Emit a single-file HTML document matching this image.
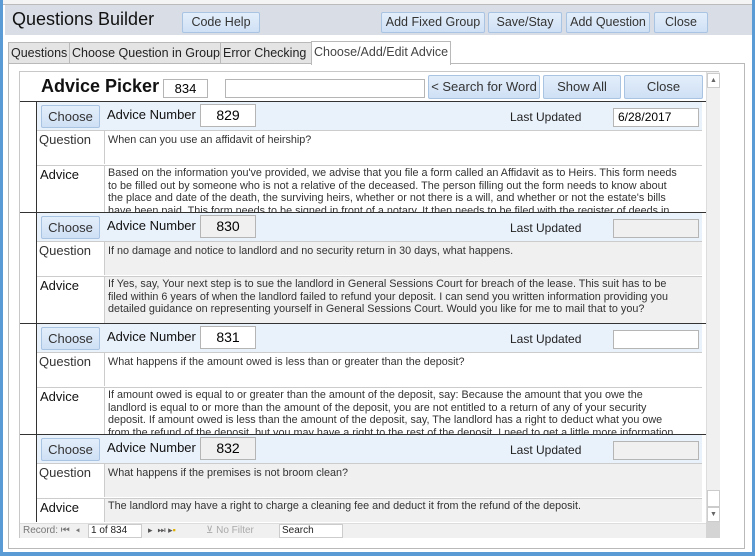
<!DOCTYPE html>
<html><head><style>
*{box-sizing:border-box;margin:0;padding:0}
body{width:755px;height:556px;overflow:hidden;background:#5b9bd5;font-family:"Liberation Sans",sans-serif;position:relative}
.a{position:absolute;white-space:nowrap}
.btn{position:absolute;background:linear-gradient(#e3eefa,#cfe0f5);border:1px solid #a9c3e3;border-radius:2px;color:#333;font-size:12.5px;text-align:center;white-space:nowrap}
.tab{position:absolute;top:42px;height:22px;background:#e4e4e4;border:1px solid #b9b9b9;font-size:12.5px;color:#222;padding:3px 2px 0;white-space:nowrap;overflow:hidden}
.box{position:absolute;border:1px solid #b5b5b5;background:#fff;font-size:13px;color:#000}
.t{position:absolute;font-size:10.8px;color:#333;line-height:12.5px;white-space:nowrap;overflow:hidden}
</style></head><body>
<div class="a" style="left:3px;top:0;width:749px;height:552px;background:#fff"></div>
<div class="a" style="left:3px;top:0;width:749px;height:5px;background:#f4f4f4;border-bottom:1px solid #bbb"></div>
<div class="a" style="left:5px;top:5px;width:747px;height:30px;background:#d9dee6"></div>
<div class="a" style="left:12px;top:9px;font-size:18px;color:#111">Questions Builder</div>
<div class="btn" style="left:182px;top:12px;width:78px;height:21px;line-height:19px">Code Help</div>
<div class="btn" style="left:381px;top:12px;width:104px;height:21px;line-height:19px">Add Fixed Group</div>
<div class="btn" style="left:488px;top:12px;width:74px;height:21px;line-height:19px">Save/Stay</div>
<div class="btn" style="left:566px;top:12px;width:84px;height:21px;line-height:19px">Add Question</div>
<div class="btn" style="left:654px;top:12px;width:54px;height:21px;line-height:19px">Close</div>
<div class="a" style="left:5px;top:35px;width:747px;height:517px;background:#fff"></div>
<div class="tab" style="left:8px;width:62px">Questions</div>
<div class="tab" style="left:69px;width:152px">Choose Question in Group</div>
<div class="tab" style="left:220px;width:92px">Error Checking</div>
<div class="tab" style="left:311px;top:41px;width:140px;height:24px;background:#fff;border-bottom:none;color:#444">Choose/Add/Edit Advice</div>
<div class="a" style="left:8px;top:63px;width:737px;height:486px;border:1px solid #b9b9b9;border-top:none"></div>
<div class="a" style="left:451px;top:63px;width:294px;height:1px;background:#b9b9b9"></div>
<div class="a" style="left:19px;top:71px;width:700px;height:467px;border:1px solid #c8c8c8"></div>
<div class="a" style="left:41px;top:76px;font-size:18px;font-weight:bold;color:#111">Advice Picker</div>
<div class="box" style="left:163px;top:79px;width:45px;height:19px;text-align:center;line-height:17px">834</div>
<div class="box" style="left:225px;top:79px;width:200px;height:19px"></div>
<div class="btn" style="left:428px;top:75px;width:112px;height:24px;line-height:22px;font-size:13px">&lt; Search for Word</div>
<div class="btn" style="left:543px;top:75px;width:78px;height:24px;line-height:22px;font-size:13px">Show All</div>
<div class="btn" style="left:624px;top:75px;width:79px;height:24px;line-height:22px;font-size:13px">Close</div>
<div class="a" style="left:706px;top:72px;width:14px;height:450px;background:#f0f0f0;border-left:1px solid #ddd"></div>
<div class="a" style="left:707px;top:73px;width:13px;height:15px;background:#fff;border:1px solid #ccc;font-size:7px;color:#666;text-align:center;line-height:13px">▲</div>
<div class="a" style="left:707px;top:490px;width:13px;height:17px;background:#fff;border:1px solid #ccc"></div>
<div class="a" style="left:707px;top:507px;width:13px;height:15px;background:#fff;border:1px solid #ccc;font-size:7px;color:#666;text-align:center;line-height:13px">▼</div>
<div class="a" style="left:706px;top:522px;width:14px;height:16px;background:#d4d4d4"></div>
<div id="recs"></div>
<div class="a" style="left:20px;top:523px;width:686px;height:15px;background:#f0f0f0;border-top:1px solid #ddd"></div>
<div class="a" style="left:23px;top:525px;font-size:10px;color:#777">Record: ⏮ &nbsp;◂</div>
<div class="a" style="left:88px;top:524px;width:54px;height:14px;background:#fff;border:1px solid #ccc;font-size:10px;color:#222;padding-left:2px;line-height:12px">1 of 834</div>
<div class="a" style="left:148px;top:525px;font-size:9px;color:#555">▸ &nbsp;⏭ ▸<span style="color:#e0b000">▪</span></div>
<div class="a" style="left:206px;top:525px;font-size:10px;color:#aaa">⊻ No Filter</div>
<div class="a" style="left:279px;top:524px;width:64px;height:14px;background:#fff;border:1px solid #ccc;font-size:10px;color:#222;padding-left:2px;line-height:12px">Search</div>
<script>
var R=[
["829","6/28/2017","When can you use an affidavit of heirship?",["Based on the information you've provided, we advise that you file a form called an Affidavit as to Heirs. This form needs","to be filled out by someone who is not a relative of the deceased. The person filling out the form needs to know about","the place and date of the death, the surviving heirs, whether or not there is a will, and whether or not the estate's bills","have been paid. This form needs to be signed in front of a notary. It then needs to be filed with the register of deeds in"],0],
["830","","If no damage and notice to landlord and no security return in 30 days, what happens.",["If Yes, say, Your next step is to sue the landlord in General Sessions Court for breach of the lease.  This suit has to be","filed within 6 years of when the landlord failed to refund your deposit.  I can send you written information providing you","detailed guidance on representing yourself in General Sessions Court.  Would you like for me to mail that to you?"],1],
["831","","What happens if the amount owed is less than or greater than the deposit?",["If amount owed is equal to or greater than the amount of the deposit, say: Because the amount that you owe the","landlord is equal to or more than the amount of the deposit, you are not entitled to a return of any of your security","deposit.    If amount owed is less than the amount of the deposit, say, The landlord has a right to deduct what you owe","from the refund of the deposit, but you may have a right to the rest of the deposit.  I need to get a little more information"],0],
["832","","What happens if the premises is not broom clean?",["The landlord may have a right to charge a cleaning fee and deduct it from the refund of the deposit."],1]];
var h="";
R.forEach(function(r,i){var y=101+i*111;var bg=r[4]?"#f0f0f0":"#fff";var end=(i==3)?522:y+111;
h+='<div class="a" style="left:20px;top:'+y+'px;width:686px;height:1px;background:#333"></div>';
h+='<div class="a" style="left:36px;top:'+(y+1)+'px;width:1px;height:'+(end-y-1)+'px;background:#333"></div>';
h+='<div class="a" style="left:37px;top:'+(y+1)+'px;width:665px;height:28px;background:#e9f1fb"></div>';
h+='<div class="btn" style="left:41px;top:'+(y+4)+'px;width:59px;height:23px;line-height:21px;font-size:13px">Choose</div>';
h+='<div class="a" style="left:107px;top:'+(y+6)+'px;font-size:13px;color:#111">Advice Number</div>';
h+='<div class="box" style="left:200px;top:'+(y+3)+'px;width:56px;height:23px;text-align:center;line-height:21px;font-size:14px;background:'+(r[4]?"#f0f0f0":"#fff")+'">'+r[0]+'</div>';
h+='<div class="a" style="left:510px;top:'+(y+9)+'px;font-size:12px;color:#222">Last Updated</div>';
h+='<div class="box" style="left:613px;top:'+(y+7)+'px;width:86px;height:19px;font-size:12px;padding-left:4px;line-height:17px;background:'+(r[4]?"#f0f0f0":"#fff")+'">'+r[1]+'</div>';
var qh=Math.min(34,end-y-29),ah=end-y-64;
h+='<div class="a" style="left:37px;top:'+(y+29)+'px;width:665px;height:'+qh+'px;border-top:1px solid #ccc;border-right:1px solid #ccc"></div>';
h+='<div class="a" style="left:104px;top:'+(y+30)+'px;width:598px;height:'+(qh-1)+'px;background:'+bg+';border-left:1px solid #ccc"></div>';
h+='<div class="a" style="left:39px;top:'+(y+31)+'px;font-size:13px;color:#333">Question</div>';
h+='<div class="t" style="left:108px;top:'+(y+33)+'px">'+r[2]+'</div>';
h+='<div class="a" style="left:37px;top:'+(y+64)+'px;width:665px;height:'+ah+'px;border-top:1px solid #ccc;border-right:1px solid #ccc"></div>';
h+='<div class="a" style="left:104px;top:'+(y+65)+'px;width:598px;height:'+(ah-1)+'px;background:'+bg+';border-left:1px solid #ccc"></div>';
h+='<div class="a" style="left:40px;top:'+(y+66)+'px;font-size:13px;color:#111">Advice</div>';
h+='<div class="t" style="left:108px;top:'+(y+66)+'px;width:590px;height:'+(ah-2)+'px">'+r[3].join("<br>")+'</div>';
});
document.getElementById("recs").innerHTML=h;
</script>
</body></html>
